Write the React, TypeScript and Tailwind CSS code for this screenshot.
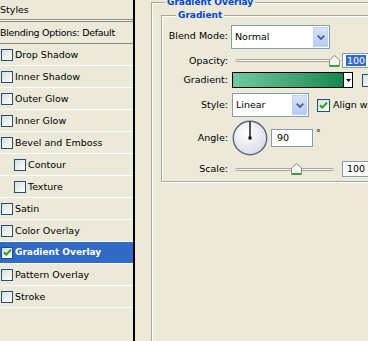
import React from "react";

function Box({ checked = false, size = "s" }: { checked?: boolean; size?: "s" | "m" }) {
  return (
    <div
      className={
        size === "s"
          ? "w-[12px] h-[12px] border border-[#1C5180] bg-gradient-to-br from-[#DCDCD7] to-white flex items-center justify-center shrink-0"
          : "w-[13px] h-[13px] border border-[#1C5180] bg-gradient-to-br from-[#DCDCD7] to-white flex items-center justify-center shrink-0"
      }
    >
      {checked && (
        <svg width="9" height="9" viewBox="0 0 9 9">
          <path d="M1 4.2 L3.3 6.6 L8 1.6" stroke="#21A121" strokeWidth="2" fill="none" />
        </svg>
      )}
    </div>
  );
}

function Chevron() {
  return (
    <div className="w-[15px] h-[20px] bg-gradient-to-b from-[#D6E3FD] to-[#B6CAF3] border border-[#C0D1F4] flex items-center justify-center shrink-0">
      <svg width="8" height="5" viewBox="0 0 8 5">
        <path d="M0.7 0.7 L4 4 L7.3 0.7" stroke="#4D6185" strokeWidth="1.8" fill="none" />
      </svg>
    </div>
  );
}

function Thumb() {
  return (
    <svg width="11" height="12" viewBox="0 0 11 12">
      <path d="M0.5 5 L5.5 0.5 L10.5 5 V11.5 H0.5 Z" fill="#F7F7F3" stroke="#8E8D84" />
      <line x1="1" y1="10.8" x2="10" y2="10.8" stroke="#21A121" strokeWidth="1.5" />
    </svg>
  );
}

const items: { label: string; sub?: boolean; checked?: boolean; sel?: boolean }[] = [
  { label: "Drop Shadow" },
  { label: "Inner Shadow" },
  { label: "Outer Glow" },
  { label: "Inner Glow" },
  { label: "Bevel and Emboss" },
  { label: "Contour", sub: true },
  { label: "Texture", sub: true },
  { label: "Satin" },
  { label: "Color Overlay" },
  { label: "Gradient Overlay", checked: true, sel: true },
  { label: "Pattern Overlay" },
  { label: "Stroke" },
];

export default function App() {
  return (
    <div className="w-[368px] h-[341px] bg-[#ECE9D8] flex overflow-hidden font-['DejaVu_Sans',sans-serif] text-[9.5px] text-black leading-none">
      {/* Left styles list */}
      <div className="w-[135px] h-full border-r-2 border-black flex flex-col shrink-0">
        <div className="h-[19px] flex items-center">Styles</div>
        <div className="h-[3px] border-y border-[#8B8A80] bg-[#F5F4EC]" />
        <div className="h-[22px] flex items-center border-b border-[#8B8A80] tracking-[-0.3px]">Blending Options: Default</div>
        {items.map((it) => (
          <div
            key={it.label}
            className={
              "h-[22px] flex items-center gap-[1px] border-b border-white " +
              (it.sub ? "pl-[14px] " : "pl-[1px] ") +
              (it.sel ? "bg-[#316AC5] text-white font-bold text-[9px]" : "")
            }
          >
            <Box checked={it.checked} />
            <span className="pl-[1px]">{it.label}</span>
          </div>
        ))}
      </div>

      {/* Right panel */}
      <div className="flex-1 pl-[16px] pt-[2px] overflow-hidden">
        <div className="relative w-[300px] h-[400px] border-l border-t border-[#ACA899] shadow-[inset_1px_1px_0_#fff]">
          <span className="absolute left-[13px] top-[-6px] px-[2px] bg-[#ECE9D8] text-[#0046D5] font-bold text-[9px] leading-[11px]">
            Gradient Overlay
          </span>

          <div className="relative ml-[9px] mt-[12px] w-[260px] h-[167px] border border-[#ACA899] shadow-[inset_1px_1px_0_#fff,0_1px_0_#fff] flex flex-col">
            <span className="absolute left-[14px] top-[-6px] px-[2px] bg-[#ECE9D8] text-[#0046D5] font-bold text-[9px] leading-[11px]">
              Gradient
            </span>

            {/* Blend mode */}
            <div className="mt-[9px] h-[24px] flex items-center">
              <div className="w-[66px] text-right -mt-[3px]">Blend Mode:</div>
              <div className="ml-[3px] w-[99px] h-[24px] border border-[#7F9DB9] bg-white flex items-center p-[1px]">
                <span className="flex-1 pl-[2px]">Normal</span>
                <Chevron />
              </div>
            </div>

            {/* Opacity */}
            <div className="mt-[4px] h-[15px] flex items-center">
              <div className="w-[66px] text-right">Opacity:</div>
              <div className="ml-[7px] w-[104px] h-[15px] relative flex items-center">
                <div className="w-[96px] h-[3px] border border-[#A5A49B] bg-[#F6F6F2] rounded-[2px]" />
                <div className="absolute left-[94px] top-[2px]">
                  <Thumb />
                </div>
              </div>
              <div className="ml-[3px] w-[34px] h-[15px] border border-[#7F9DB9] bg-white flex items-center pl-[3px]">
                <span className="bg-[#316AC5] text-white px-[1px] leading-[11px]">100</span>
              </div>
            </div>

            {/* Gradient */}
            <div className="mt-[4px] h-[16px] flex items-center">
              <div className="w-[66px] text-right">Gradient:</div>
              <div className="ml-[4px] h-[16px] border border-black flex">
                <div className="w-[110px] h-full bg-gradient-to-r from-[#6FCA9F] to-[#0E8951]" />
                <div className="w-[9px] h-full border-l border-black bg-white flex items-center justify-center">
                  <svg width="5" height="3" viewBox="0 0 5 3">
                    <path d="M0 0 H5 L2.5 3 Z" fill="#000" />
                  </svg>
                </div>
              </div>
              <div className="ml-[9px]">
                <Box size="m" />
              </div>
            </div>

            {/* Style */}
            <div className="mt-[5px] h-[24px] flex items-center">
              <div className="w-[66px] text-right">Style:</div>
              <div className="ml-[4px] w-[77px] h-[24px] border border-[#7F9DB9] bg-white flex items-center p-[1px]">
                <span className="flex-1 pl-[2px]">Linear</span>
                <Chevron />
              </div>
              <div className="ml-[8px]">
                <Box size="m" checked />
              </div>
              <span className="ml-[3px] whitespace-nowrap">Align with Layer</span>
            </div>

            {/* Angle */}
            <div className="mt-[3px] h-[36px] flex items-center">
              <div className="w-[66px] text-right">Angle:</div>
              <div className="ml-[4px] w-[36px] h-[36px]">
                <svg width="36" height="36" viewBox="0 0 36 36">
                  <defs>
                    <radialGradient id="dialg" cx="40%" cy="35%" r="70%">
                      <stop offset="0" stopColor="#FFFFFF" />
                      <stop offset="1" stopColor="#D9DAE3" />
                    </radialGradient>
                  </defs>
                  <circle cx="18" cy="18" r="16.7" fill="url(#dialg)" stroke="#5A6683" strokeWidth="1.4" />
                  <line x1="18" y1="18" x2="18" y2="1.5" stroke="#000" strokeWidth="1.3" />
                  <rect x="16.5" y="16.5" width="3" height="3" fill="#000" />
                </svg>
              </div>
              <div className="ml-[3px] w-[42px] h-[18px] border border-[#7F9DB9] bg-white flex items-center pl-[5px]">
                90
              </div>
              <span className="ml-[3px] self-start mt-[8px]">°</span>
            </div>

            {/* Scale */}
            <div className="mt-[5px] h-[16px] flex items-center">
              <div className="w-[66px] text-right">Scale:</div>
              <div className="ml-[7px] w-[103px] h-[16px] relative flex items-center">
                <div className="w-[99px] h-[3px] border border-[#A5A49B] bg-[#F6F6F2] rounded-[2px]" />
                <div className="absolute left-[56px] top-[2px]">
                  <Thumb />
                </div>
              </div>
              <div className="ml-[4px] w-[34px] h-[16px] border border-[#7F9DB9] bg-white flex items-center pl-[4px]">
                100
              </div>
            </div>
          </div>
        </div>
      </div>
    </div>
  );
}
